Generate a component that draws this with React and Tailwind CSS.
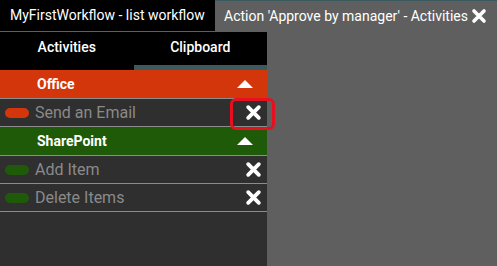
import { useState } from 'react'

const GROUPS = [
  {
    name: 'Office',
    color: '#d4360c',
    items: ['Send an Email'],
  },
  {
    name: 'SharePoint',
    color: '#1f5a08',
    items: ['Add Item', 'Delete Items'],
  },
]

function CloseIcon({ className }) {
  return (
    <svg viewBox="0 0 16 16" className={className}>
      <path d="M3 3 L13 13 M13 3 L3 13" stroke="white" strokeWidth="3.6" strokeLinecap="round" fill="none" />
    </svg>
  )
}

function UpTriangle() {
  return (
    <svg viewBox="0 0 16 8" className="w-[16px] h-[8px]">
      <path d="M8 0 L16 8 L0 8 Z" fill="white" />
    </svg>
  )
}

export default function App() {
  const [activeTab, setActiveTab] = useState('clipboard')

  return (
    <div
      className="w-[497px] h-[266px] overflow-hidden bg-[#5f5f5f] flex flex-col"
      style={{ fontFamily: 'Roboto, "Liberation Sans", sans-serif' }}
    >
      {/* ── Document tabs ── */}
      <div className="flex h-[31px] shrink-0 border-t border-[#3a5a60]">
        <div className="w-[215px] bg-black text-white text-[14px] whitespace-nowrap flex items-center pl-[10px] -mt-px">
          MyFirstWorkflow - list workflow
        </div>
        <div className="flex-1 text-white text-[14px] whitespace-nowrap flex items-center pl-[9px] gap-[3px]">
          <span>Action 'Approve by manager' - Activities</span>
          <CloseIcon className="w-[16px] h-[16px] shrink-0" />
        </div>
      </div>

      {/* ── Toolbox panel ── */}
      <div className="mt-px w-[267px] flex-1 bg-[#2f2f2f] flex flex-col">
        <div className="flex bg-black h-[38px] shrink-0">
          {[
            { key: 'activities', label: 'Activities' },
            { key: 'clipboard', label: 'Clipboard' },
          ].map(({ key, label }) => (
            <button
              key={key}
              onClick={() => setActiveTab(key)}
              className={
                'flex-1 text-white text-[14px] font-medium pt-[2px] pb-[5px] border-b-[5px] ' +
                (activeTab === key ? 'border-[#3a5a60]' : 'border-black')
              }
            >
              {label}
            </button>
          ))}
        </div>

        {GROUPS.map((g) => (
          <div key={g.name}>
            <div
              className="h-[29px] flex items-center justify-between pl-[37px] pr-[14px] border-b border-[#8c8c8c]"
              style={{ background: g.color }}
            >
              <span className="text-white text-[14px] font-bold">{g.name}</span>
              <UpTriangle />
            </div>
            {g.items.map((item, i) => (
              <div
                key={item}
                className="h-[28px] flex items-center pl-[5px] pr-[5px] border-b border-[#8c8c8c]"
              >
                <span className="w-[24px] h-[10px] rounded-full" style={{ background: g.color }} />
                <span className="ml-[6px] text-[16px] text-[#8a8a8a] flex-1">{item}</span>
                {g.name === 'Office' && i === 0 ? (
                  <span className="relative flex">
                    <CloseIcon className="w-[17px] h-[17px]" />
                    <span className="absolute -left-[15px] -top-[6px] w-[45px] h-[32px] border-[3px] border-[#e8101e] rounded-[6px]" />
                  </span>
                ) : (
                  <CloseIcon className="w-[17px] h-[17px]" />
                )}
              </div>
            ))}
          </div>
        ))}
      </div>
    </div>
  )
}
